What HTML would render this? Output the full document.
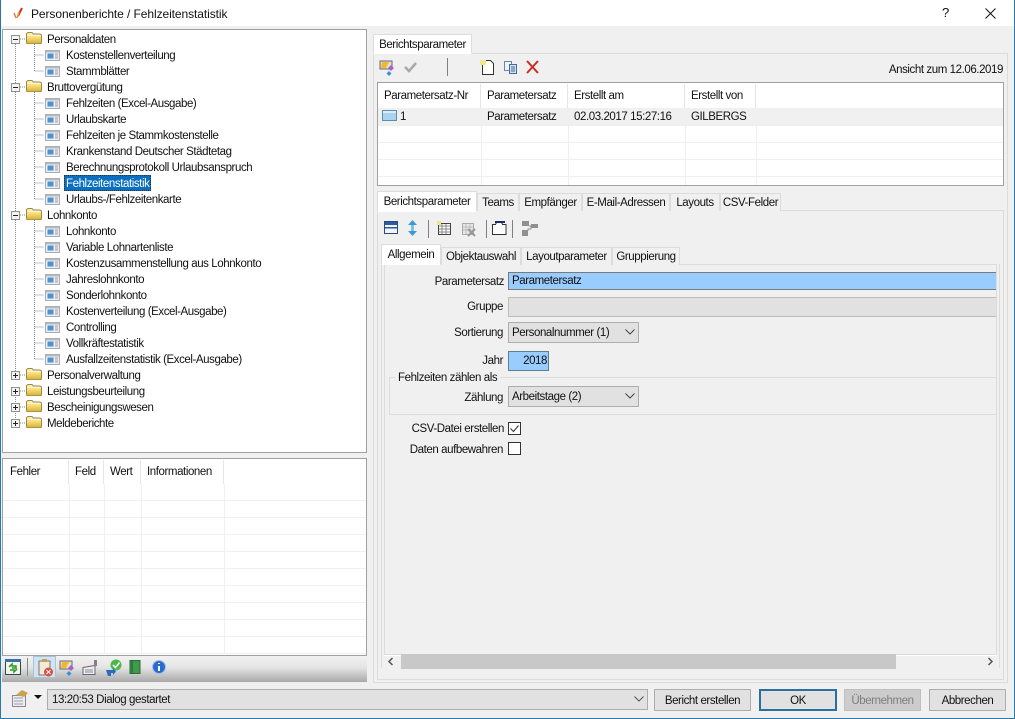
<!DOCTYPE html>
<html><head><meta charset="utf-8"><title>Personenberichte</title>
<style>
html,body{margin:0;padding:0;width:1015px;height:719px;overflow:hidden;background:#f0f0f0}
body{position:relative;font:11.5px/14px "Liberation Sans",sans-serif;letter-spacing:-.42px;color:#111}
div{position:absolute;box-sizing:border-box}
.t{white-space:nowrap;height:14px}
.r{text-align:right}
.c{text-align:center}
.box{background:#fff;border:1px solid #a0a0a0}
.g{background:#f0f0f0}
.tab{background:#f0f0f0;border:1px solid #dcdcdc;border-bottom:0;text-align:center;white-space:nowrap;line-height:20px}
.tab.a{background:#fff}
.btn{background:#e1e1e1;border:1px solid #adadad;text-align:center;line-height:22px;top:689px;height:22px}
.sel{background:#e1e1e1;border:1px solid #adadad;line-height:21px;padding-left:3px}
svg{position:absolute;overflow:visible}
</style></head><body>
<svg width="0" height="0" style="position:absolute"><defs>
<linearGradient id="fg" x1="0" y1="0" x2="0" y2="1"><stop offset="0" stop-color="#fdf5c0"/><stop offset=".5" stop-color="#f3d873"/><stop offset="1" stop-color="#d8ae3c"/></linearGradient>
<symbol id="f" viewBox="0 0 16 12"><path d="M.5 3V1.500L2 .5h4L7.500 2h6.500l1.500 1v8l-1 .8H1.500l-1-.8z" fill="url(#fg)" stroke="#a08840"/><path d="M1.500 3.500h13" stroke="#fffbe0"/></symbol>
<symbol id="d" viewBox="0 0 15 11"><path d="M.5.500h14v10H.5z" fill="#eceef0" stroke="#a9adb2"/><path d="M1 1h13v1.500H1z" fill="#b8bcc2"/><path d="M2.500 3.500h6v5h-6z" fill="#4e93c9"/><path d="M10 4h3M10 6h3M10 8h3" stroke="#9aa0a6"/></symbol>
<symbol id="m" viewBox="0 0 9 9"><path d="M.5.500h8v8h-8z" fill="#f4f4f4" stroke="#909090"/><path d="M2 4.500h5" stroke="#222"/></symbol>
<symbol id="p" viewBox="0 0 9 9"><path d="M.5.500h8v8h-8z" fill="#f4f4f4" stroke="#909090"/><path d="M2 4.500h5M4.500 2v5" stroke="#222"/></symbol>
<symbol id="s" viewBox="0 0 17 17"><path d="M1 2h12v8H1z" fill="#e8e2c4" stroke="#667"/><path d="M3 3h7l-3 6H2z" fill="#f0b830"/><path d="M12 6l3 3-3 3-3-3z" fill="#a860d0"/><path d="M10 12l2.500 2.500L10 17l-2.500-2.500z" fill="#3f8fd8"/></symbol>
</defs></svg>

<!-- window frame -->
<div style="left:0;top:0;width:1015px;height:26px;background:#fff"></div>
<div style="left:0;top:0;width:1px;height:719px;background:#2a78a8"></div>
<div style="left:1014px;top:0;width:1px;height:719px;background:#2a78a8"></div>
<div style="left:0;top:718px;width:1015px;height:1px;background:#2a78a8"></div>
<svg style="left:13px;top:7px" width="11" height="13"><path d="M1 6l2 5" stroke="#d87a60" stroke-width="1.500" fill="none"/><path d="M5 9L9 1" stroke="#d83020" stroke-width="2" fill="none"/><path d="M4 11L6 5" stroke="#e8a030" stroke-width="1.500" fill="none"/></svg>
<div class="t" style="left:31px;top:7px;font-size:12px;letter-spacing:-.08px">Personenberichte / Fehlzeitenstatistik</div>
<div class="t" style="left:942px;top:6px;font-size:13px">?</div>
<svg style="left:985px;top:8px" width="11" height="11"><path d="M.5.500l10 10M10.500.500l-10 10" stroke="#111" fill="none"/></svg>

<!-- tree -->
<div class="box" style="left:2px;top:29px;width:365px;height:424px"></div>
<svg style="left:0;top:0" width="370" height="440">
<path d="M15.500 44V375M15.500 391v28M34.500 44V71H44M34.500 55H44M34.500 92V199H44M34.500 103H44M34.500 119H44M34.500 135H44M34.500 151H44M34.500 167H44M34.500 183H44M34.500 220V359H44M34.500 231H44M34.500 247H44M34.500 263H44M34.500 279H44M34.500 295H44M34.500 311H44M34.500 327H44M34.500 343H44M20 39h6M20 87h6M20 215h6M20 375h6M20 391h6M20 407h6M20 423h6" stroke="#888" stroke-dasharray="1 1" fill="none"/>
<use href="#m" x="11" y="35" width="9" height="9"/><use href="#m" x="11" y="83" width="9" height="9"/><use href="#m" x="11" y="211" width="9" height="9"/>
<use href="#p" x="11" y="371" width="9" height="9"/><use href="#p" x="11" y="387" width="9" height="9"/><use href="#p" x="11" y="403" width="9" height="9"/><use href="#p" x="11" y="419" width="9" height="9"/>
<use href="#f" x="26" y="32" width="16" height="12"/><use href="#f" x="26" y="80" width="16" height="12"/><use href="#f" x="26" y="208" width="16" height="12"/>
<use href="#f" x="26" y="368" width="16" height="12"/><use href="#f" x="26" y="384" width="16" height="12"/><use href="#f" x="26" y="400" width="16" height="12"/><use href="#f" x="26" y="416" width="16" height="12"/>
<use href="#d" x="45" y="50" width="15" height="11"/><use href="#d" x="45" y="66" width="15" height="11"/>
<use href="#d" x="45" y="98" width="15" height="11"/><use href="#d" x="45" y="114" width="15" height="11"/><use href="#d" x="45" y="130" width="15" height="11"/><use href="#d" x="45" y="146" width="15" height="11"/><use href="#d" x="45" y="162" width="15" height="11"/><use href="#d" x="45" y="178" width="15" height="11"/><use href="#d" x="45" y="194" width="15" height="11"/>
<use href="#d" x="45" y="226" width="15" height="11"/><use href="#d" x="45" y="242" width="15" height="11"/><use href="#d" x="45" y="258" width="15" height="11"/><use href="#d" x="45" y="274" width="15" height="11"/><use href="#d" x="45" y="290" width="15" height="11"/><use href="#d" x="45" y="306" width="15" height="11"/><use href="#d" x="45" y="322" width="15" height="11"/><use href="#d" x="45" y="338" width="15" height="11"/><use href="#d" x="45" y="354" width="15" height="11"/>
</svg>
<div class="t" style="left:47px;top:33px">Personaldaten</div>
<div class="t" style="left:66px;top:49px">Kostenstellenverteilung</div>
<div class="t" style="left:66px;top:65px">Stammblätter</div>
<div class="t" style="left:47px;top:81px">Bruttovergütung</div>
<div class="t" style="left:66px;top:97px">Fehlzeiten (Excel-Ausgabe)</div>
<div class="t" style="left:66px;top:113px">Urlaubskarte</div>
<div class="t" style="left:66px;top:129px">Fehlzeiten je Stammkostenstelle</div>
<div class="t" style="left:66px;top:145px">Krankenstand Deutscher Städtetag</div>
<div class="t" style="left:66px;top:161px">Berechnungsprotokoll Urlaubsanspruch</div>
<div style="left:64px;top:175px;width:87px;height:16px;background:#0a6fc0;outline:1px dotted #333;outline-offset:-1px"></div>
<div class="t" style="left:66px;top:177px;color:#fff">Fehlzeitenstatistik</div>
<div class="t" style="left:66px;top:193px">Urlaubs-/Fehlzeitenkarte</div>
<div class="t" style="left:47px;top:209px">Lohnkonto</div>
<div class="t" style="left:66px;top:225px">Lohnkonto</div>
<div class="t" style="left:66px;top:241px">Variable Lohnartenliste</div>
<div class="t" style="left:66px;top:257px">Kostenzusammenstellung aus Lohnkonto</div>
<div class="t" style="left:66px;top:273px">Jahreslohnkonto</div>
<div class="t" style="left:66px;top:289px">Sonderlohnkonto</div>
<div class="t" style="left:66px;top:305px">Kostenverteilung (Excel-Ausgabe)</div>
<div class="t" style="left:66px;top:321px">Controlling</div>
<div class="t" style="left:66px;top:337px">Vollkräftestatistik</div>
<div class="t" style="left:66px;top:353px">Ausfallzeitenstatistik (Excel-Ausgabe)</div>
<div class="t" style="left:47px;top:369px">Personalverwaltung</div>
<div class="t" style="left:47px;top:385px">Leistungsbeurteilung</div>
<div class="t" style="left:47px;top:401px">Bescheinigungswesen</div>
<div class="t" style="left:47px;top:417px">Meldeberichte</div>

<!-- error grid -->
<div class="box" style="left:2px;top:458px;width:365px;height:198px"></div>
<svg style="left:0;top:0" width="370" height="660">
<path d="M3 500.500H366M3 517.500H366M3 534.500H366M3 551.500H366M3 568.500H366M3 585.500H366M3 602.500H366M3 619.500H366M3 636.500H366M3 653.500H366M69.500 484V654M104.500 484V654M141.500 484V654M224.500 484V654" stroke="#f0f0f0" fill="none"/>
<path d="M68.500 460V484M103.500 460V484M140.500 460V484M223.500 460V484" stroke="#e6e6e6" fill="none"/>
</svg>
<div class="t" style="left:10px;top:465px">Fehler</div>
<div class="t" style="left:75px;top:465px">Feld</div>
<div class="t" style="left:110px;top:465px">Wert</div>
<div class="t" style="left:147px;top:465px">Informationen</div>

<!-- left toolbar -->
<div style="left:2px;top:656px;width:365px;height:26px;background:linear-gradient(#f2f2f2 0%,#e4e4e4 45%,#a9a9a9 100%)"></div>
<div style="left:33px;top:656px;width:23px;height:22px;background:#d4e3f0;border:1px solid #a8c4dc"></div>
<div style="left:27px;top:658px;width:1px;height:18px;background:#888"></div>
<svg style="left:0;top:0" width="175" height="710">
<path d="M5.500 659.500h15v15h-15z" fill="#f4f4e8" stroke="#345"/><path d="M5 659h16v3H5z" fill="#3a6ea8"/>
<path d="M9 667l3-3v2h4v2h-4M17 669l-3 3v-2h-4" fill="none" stroke="#2a9a30" stroke-width="1.500"/>
<path d="M39 661h11v14H39z" fill="#f4ead8" stroke="#777"/><path d="M42 659h5v3h-5z" fill="#c8a050"/><circle cx="48.500" cy="672" r="4.500" fill="#d85040"/><path d="M46.500 670l4 4M50.500 670l-4 4" stroke="#fff"/>
<use href="#s" x="59" y="659" width="17" height="17"/>
<path d="M83 667.500l12-2v9H83z" fill="#eee" stroke="#667"/><path d="M85 670h8M85 672h8" stroke="#889"/><path d="M94 660h3v6h-3z" fill="#8a7a8a"/>
<circle cx="116" cy="665" r="5.500" fill="#4cb84a"/><path d="M113 665l2.500 2.500 4-5" fill="none" stroke="#fff" stroke-width="1.500"/><path d="M106 670h7v-2l3 3.500-3 3.500v-2h-2v3h-3z" fill="#2a6ac0"/>
<path d="M130 660.500h10v13h-10z" fill="#3f9a4c" stroke="#2a6a35"/><path d="M132 661v12" stroke="#1f5a2c"/>
<circle cx="159" cy="667" r="6.500" fill="#2a6ccc" stroke="#a8c0e8"/><path d="M159 663v1M159 666v5" stroke="#fff" stroke-width="2"/>
</svg>

<!-- status row -->
<svg style="left:0;top:0" width="48" height="712">
<path d="M12.500 695.500h13v11h-13z" fill="#eee" stroke="#889"/><path d="M14 698h9M14 701h9M14 704h9" stroke="#99a"/><path d="M16 695l6-5 6 3-4 4z" fill="#c9a450"/>
<path d="M34 695h8l-4 4z" fill="#111"/>
</svg>
<div class="sel" style="left:47px;top:689px;width:601px;height:21px;padding-left:4px">13:20:53 Dialog gestartet</div>
<svg style="left:634px;top:696px" width="10" height="6"><path d="M.5.500l4.500 4.500 4.500-4.500" fill="none" stroke="#555"/></svg>
<div class="btn" style="left:654px;width:97px">Bericht erstellen</div>
<div class="btn" style="left:759px;width:78px;border:2px solid #2a6f9e;line-height:20px">OK</div>
<div class="btn" style="left:844px;width:77px;background:#cccccc;border-color:#bfbfbf;color:#7d7d7d">Übernehmen</div>
<div class="btn" style="left:929px;width:77px">Abbrechen</div>

<!-- upper right -->
<div style="left:373px;top:53px;width:635px;height:1px;background:#dcdcdc"></div>
<div style="left:373px;top:53px;width:1px;height:630px;background:#dcdcdc"></div>
<div style="left:1007px;top:53px;width:1px;height:630px;background:#dcdcdc"></div>
<div style="left:373px;top:682px;width:635px;height:1px;background:#dcdcdc"></div>
<div class="tab a" style="left:373px;top:34px;width:99px;height:20px;border-bottom:1px solid #fff">Berichtsparameter</div>
<svg style="left:0;top:0" width="560" height="82">
<use href="#s" x="379" y="59" width="17" height="17"/>
<path d="M405 67l4 4 7-8" fill="none" stroke="#a8a8a8" stroke-width="2.500"/>
<path d="M447.500 58v18" stroke="#808080"/>
<path d="M482.500 60.500h8l3 3v11h-11z" fill="#fff" stroke="#333"/><path d="M480 60h6v5h-6z" fill="#f2e68a"/>
<path d="M504.500 61.500h7v9h-7z" fill="#eef3fa" stroke="#6a86a8"/><path d="M509.500 64.500h7v9h-7z" fill="#cfe0f0" stroke="#4a6a98"/><path d="M511 67h4M511 69h4M511 71h4" stroke="#4a6a98"/>
<path d="M527 61l11 12M538 61L527 73" stroke="#cc2b22" stroke-width="2"/>
</svg>
<div class="t r" style="left:800px;top:63px;width:203px">Ansicht zum 12.06.2019</div>

<div class="box" style="left:377px;top:82px;width:627px;height:104px"></div>
<div style="left:378px;top:108px;width:625px;height:17px;background:#f0f0f0"></div>
<svg style="left:0;top:0" width="1004" height="186">
<path d="M378 125.500h625M378 142.500h625M378 159.500h625M378 176.500h625M481.500 108V185M568.500 108V185M685.500 108V185M756.500 108V185" stroke="#efefef" fill="none"/>
<path d="M480.500 84v24M567.500 84v24M684.500 84v24M755.500 84v24" stroke="#e4e4e4" fill="none"/>
<path d="M382.500 110.500h14v10h-14z" fill="#a9d3ee" stroke="#5b8fb0"/><path d="M383 111h13v2h-13z" fill="#dcecf7"/>
</svg>
<div class="t" style="left:384px;top:89px">Parametersatz-Nr</div>
<div class="t" style="left:487px;top:89px">Parametersatz</div>
<div class="t" style="left:574px;top:89px">Erstellt am</div>
<div class="t" style="left:691px;top:89px">Erstellt von</div>
<div class="t" style="left:400px;top:110px">1</div>
<div class="t" style="left:487px;top:110px">Parametersatz</div>
<div class="t" style="left:574px;top:110px">02.03.2017 15:27:16</div>
<div class="t" style="left:691px;top:110px">GILBERGS</div>

<!-- lower tabs -->
<div style="left:377px;top:210px;width:627px;height:470px;border:1px solid #dcdcdc"></div>
<div class="tab a" style="left:377px;top:191px;width:100px;height:21px;border-bottom:1px solid #fff;line-height:20px">Berichtsparameter</div>
<div class="tab" style="left:477px;top:193px;width:42px;height:18px;line-height:19px">Teams</div>
<div class="tab" style="left:519px;top:193px;width:63px;height:18px;line-height:19px">Empfänger</div>
<div class="tab" style="left:582px;top:193px;width:88px;height:18px;line-height:19px">E-Mail-Adressen</div>
<div class="tab" style="left:670px;top:193px;width:50px;height:18px;line-height:19px">Layouts</div>
<div class="tab" style="left:720px;top:193px;width:61px;height:18px;line-height:19px">CSV-Felder</div>

<svg style="left:0;top:0" width="560" height="242">
<path d="M384.500 221.500h13v12h-13z" fill="#f4f4f4" stroke="#2a4a80"/><path d="M385 222h12v3h-12zM385 227h12v1.500h-12z" fill="#2a5aa0"/>
<path d="M412.500 220l-4.500 5h9zM412.500 236l-4.500-5h9z" fill="#3a9ad8"/><path d="M411 225h3v6h-3z" fill="#7cc0e8"/>
<path d="M428.500 220v18M486.500 220v18M512.500 220v18M428.500 220" stroke="#808080"/>
<path d="M438.500 223.500h12v11h-12z" fill="#fff" stroke="#444"/><path d="M439 226h11M439 229h11M439 232h11M442 224v10M446 224v10" stroke="#888"/><path d="M437 221h4v4h-4z" fill="#f2e68a"/>
<path d="M462.500 223.500h11v11h-11z" fill="#e8e8e8" stroke="#aaa"/><path d="M463 227h10M463 230h10M466 224v10M470 224v10" stroke="#bbb"/><path d="M468 229l7 7M475 229l-7 7" stroke="#999" stroke-width="2"/>
<path d="M492.500 224.500h3l1-2h5l1 2h3.500v10h-13.500z" fill="#fff" stroke="#333"/>
<path d="M495 222h10" stroke="#1c2a70" stroke-width="2"/>
<path d="M522 221h7v5h-7zM531 224h7v4h-7zM522 230h6v6h-6z" fill="#909090"/><path d="M529 226h2v3h-3v2" stroke="#909090" fill="none"/>
</svg>

<!-- inner tabs -->
<div style="left:384px;top:264px;width:613px;height:391px;border:1px solid #dcdcdc;background:#f0f0f0"></div>
<div style="left:381px;top:264px;width:3px;height:404px;border-left:1px solid #dcdcdc"></div>
<div style="left:997px;top:264px;width:3px;height:404px;border-right:1px solid #dcdcdc"></div>
<div class="tab a" style="left:381px;top:244px;width:60px;height:21px;border-bottom:1px solid #fff;line-height:21px">Allgemein</div>
<div class="tab" style="left:441px;top:247px;width:80px;height:18px;line-height:18px">Objektauswahl</div>
<div class="tab" style="left:521px;top:247px;width:91px;height:18px;line-height:18px">Layoutparameter</div>
<div class="tab" style="left:612px;top:247px;width:68px;height:18px;line-height:18px">Gruppierung</div>

<!-- form -->
<div class="t r" style="left:400px;top:275px;width:104px">Parametersatz</div>
<div style="left:508px;top:272px;width:488px;height:18px;background:#99ccff;border:1px solid #7a7a7a;border-right:0;line-height:17px;padding-left:3px;white-space:nowrap">Parametersatz</div>
<div class="t r" style="left:400px;top:300px;width:103px">Gruppe</div>
<div style="left:508px;top:297px;width:488px;height:20px;background:#e1e1e1;border:1px solid #bcbcbc;border-right:0"></div>
<div class="t r" style="left:400px;top:326px;width:103px">Sortierung</div>
<div class="sel" style="left:508px;top:322px;width:131px;height:21px">Personalnummer (1)</div>
<svg style="left:625px;top:329px" width="10" height="6"><path d="M.5.500l4.500 4.500 4.500-4.500" fill="none" stroke="#444"/></svg>
<div class="t r" style="left:400px;top:354px;width:103px">Jahr</div>
<div class="r" style="left:508px;top:351px;width:41px;height:20px;background:#99ccff;border:1px solid #5f7f8f;line-height:18px;padding-right:1px">2018</div>
<div style="left:389px;top:377px;width:607px;height:38px;border:1px solid #dcdcdc;border-right:0"></div>
<div class="t" style="left:395px;top:371px;background:#f0f0f0;padding:0 3px">Fehlzeiten zählen als</div>
<div class="t r" style="left:400px;top:391px;width:103px">Zählung</div>
<div class="sel" style="left:508px;top:386px;width:131px;height:21px">Arbeitstage (2)</div>
<svg style="left:625px;top:393px" width="10" height="6"><path d="M.5.500l4.500 4.500 4.500-4.500" fill="none" stroke="#444"/></svg>
<div class="t r" style="left:400px;top:422px;width:104px">CSV-Datei erstellen</div>
<div style="left:508px;top:422px;width:13px;height:13px;background:#fff;border:1px solid #333"></div>
<svg style="left:508px;top:422px" width="13" height="13"><path d="M2.500 6.500l3 3 5-6" fill="none" stroke="#444" stroke-width="1.200"/></svg>
<div class="t r" style="left:400px;top:443px;width:103px">Daten aufbewahren</div>
<div style="left:508px;top:442px;width:13px;height:13px;background:#fff;border:1px solid #333"></div>

<!-- scrollbar -->
<div style="left:384px;top:655px;width:613px;height:13px;background:#f0f0f0;border-top:1px solid #fff"></div>
<div style="left:401px;top:654px;width:495px;height:15px;background:#c8c8c8"></div>
<svg style="left:384px;top:657px" width="613" height="9"><path d="M8.500 1l-3.500 3.500 3.500 3.500M604.500 1l3.500 3.500-3.500 3.500" fill="none" stroke="#555" stroke-width="1.500"/></svg>
</body></html>
